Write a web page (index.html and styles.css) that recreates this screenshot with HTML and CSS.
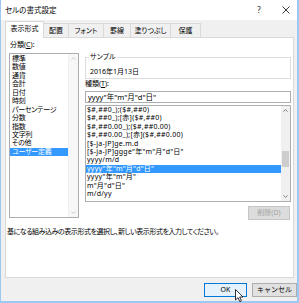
FILE: index.html
```html
<!DOCTYPE html>
<html lang="ja">
<head>
<meta charset="utf-8">
<title>セルの書式設定</title>
<link rel="stylesheet" href="styles.css">
</head>
<body>
<div class="window">
  <div class="titlebar">
    <span class="title">セルの書式設定</span>
    <span class="help">?</span>
    <span class="close"><svg width="8" height="8" viewBox="0 0 8 8"><path d="M0.5 0.5 L7.5 7.5 M7.5 0.5 L0.5 7.5" stroke="#222" stroke-width="0.9" fill="none"/></svg></span>
  </div>
  <div class="body">
    <div class="tabs">
      <div class="tab active">表示形式</div>
      <div class="tab">配置</div>
      <div class="tab">フォント</div>
      <div class="tab">罫線</div>
      <div class="tab">塗りつぶし</div>
      <div class="tab">保護</div>
    </div>
    <div class="panel">
      <div class="columns">
        <div class="left">
          <div class="label">分類(<u>C</u>):</div>
          <div class="listbox cat">
            <ul class="items">
              <li>標準</li>
              <li>数値</li>
              <li>通貨</li>
              <li>会計</li>
              <li>日付</li>
              <li>時刻</li>
              <li>パーセンテージ</li>
              <li>分数</li>
              <li>指数</li>
              <li>文字列</li>
              <li>その他</li>
              <li class="sel">ユーザー定義</li>
            </ul>
            <div class="scroll disabled">
              <span class="arrow"><svg width="5" height="3" viewBox="0 0 5 3"><path d="M0.5 2.6 L2.5 0.6 L4.5 2.6" stroke="currentColor" stroke-width="0.8" fill="none"/></svg></span>
              <span class="track"></span>
              <span class="arrow"><svg width="5" height="3" viewBox="0 0 5 3"><path d="M0.5 0.4 L2.5 2.4 L4.5 0.4" stroke="currentColor" stroke-width="0.8" fill="none"/></svg></span>
            </div>
          </div>
        </div>
        <div class="right">
          <fieldset class="sample">
            <legend>サンプル</legend>
            <div class="sample-value">2016年1月13日</div>
          </fieldset>
          <div class="label type-label">種類(<u>T</u>):</div>
          <div class="input">yyyy"年"m"月"d"日"</div>
          <div class="listbox fmt">
            <ul class="items">
              <li>$#,##0_);($#,##0)</li>
              <li>$#,##0_);[赤]($#,##0)</li>
              <li>$#,##0.00_);($#,##0.00)</li>
              <li>$#,##0.00_);[赤]($#,##0.00)</li>
              <li>[$-ja-JP]ge.m.d</li>
              <li>[$-ja-JP]ggge"年"m"月"d"日"</li>
              <li>yyyy/m/d</li>
              <li class="sel">yyyy"年"m"月"d"日"</li>
              <li>yyyy"年"m"月"</li>
              <li>m"月"d"日"</li>
              <li>m/d/yy</li>
            </ul>
            <div class="scroll">
              <span class="arrow"><svg width="5" height="3" viewBox="0 0 5 3"><path d="M0.5 2.6 L2.5 0.6 L4.5 2.6" stroke="currentColor" stroke-width="0.8" fill="none"/></svg></span>
              <span class="track"><span class="thumb"></span></span>
              <span class="arrow"><svg width="5" height="3" viewBox="0 0 5 3"><path d="M0.5 0.4 L2.5 2.4 L4.5 0.4" stroke="currentColor" stroke-width="0.8" fill="none"/></svg></span>
            </div>
          </div>
          <div class="btnrow">
            <button class="btn delete" disabled>削除(D)</button>
          </div>
        </div>
      </div>
      <p class="hint">基になる組み込みの表示形式を選択し、新しい表示形式を入力してください。</p>
    </div>
    <div class="footer">
      <button class="btn ok">OK</button>
      <button class="btn cancel">キャンセル</button>
    </div>
  </div>
  <svg class="cursor" width="10" height="14" viewBox="0 0 10 14"><path d="M0.5 0.5 L0.5 11 L3 8.6 L4.8 12.6 L6.4 11.9 L4.7 8 L8 8 Z" fill="#fff" stroke="#000" stroke-width="0.8" stroke-linejoin="round"/></svg>
</div>
</body>
</html>
```
FILE: styles.css
```css
* {
  box-sizing: border-box;
  margin: 0;
  padding: 0;
}

html, body {
  width: 299px;
  height: 303px;
  overflow: hidden;
  background: #ffffff;
}

body {
  font-family: "Noto Sans", "Noto Sans CJK JP", sans-serif;
  font-size: 7px;
  line-height: 8px;
  color: #000;
  font-feature-settings: "palt" 1;
}

.window {
  position: relative;
  width: 299px;
  height: 303px;
  display: flex;
  flex-direction: column;
  background: #f0f0f0;
  border-left: 1px solid #9cc8f4;
  border-right: 2px solid #9cc8f4;
  border-bottom: 2px solid #9cc8f4;
}

/* title bar */
.titlebar {
  height: 20px;
  flex: none;
  display: flex;
  align-items: center;
  background: #fff;
  padding-left: 4px;
  padding-right: 1px;
}

.title {
  flex: 1;
  font-size: 7.5px;
}

.help {
  width: 20px;
  text-align: center;
  font-size: 8px;
  margin-right: 7px;
  color: #222;
}

.close {
  width: 20px;
  display: flex;
  justify-content: center;
}

/* body */
.body {
  flex: 1;
  display: flex;
  flex-direction: column;
  padding: 1px 3px 0 4px;
}

.tabs {
  height: 16px;
  display: flex;
  align-items: flex-end;
}

.tab {
  height: 14px;
  display: flex;
  align-items: center;
  justify-content: center;
  border: 1px solid #d9d9d9;
  border-left: none;
  border-bottom: none;
  background: #f0f0f0;
}

.tab.active {
  height: 17px;
  margin-bottom: -1px;
  border-left: 1px solid #d9d9d9;
  background: #fff;
  position: relative;
  z-index: 1;
  padding-bottom: 2px;
}

.tab:nth-child(1) { width: 39px; }
.tab:nth-child(2) { width: 25px; }
.tab:nth-child(3) { width: 35px; }
.tab:nth-child(4) { width: 27px; }
.tab:nth-child(5) { width: 40px; }
.tab:nth-child(6) { width: 30px; }

.panel {
  height: 241px;
  flex: none;
  border: 1px solid #d9d9d9;
  background: #fff;
}

.columns {
  display: flex;
  gap: 6px;
  margin: 3px 2px 0 3px;
}

.left {
  width: 70px;
  flex: none;
}

.right {
  flex: 1;
  display: flex;
  flex-direction: column;
}

.label {
  height: 8px;
  padding-left: 1px;
}

.label u {
  text-decoration: underline;
  text-underline-offset: 1px;
}

/* list boxes */
.listbox {
  display: flex;
  border: 1px solid #abadb3;
  background: #fff;
}

.listbox .items {
  list-style: none;
  flex: 1;
  padding-top: 1px;
  overflow: hidden;
}

.listbox li {
  height: 8.45px;
  line-height: 8.45px;
  white-space: nowrap;
}

.listbox li.sel {
  background: #3399ff;
  color: #fff;
}

.cat {
  height: 165px;
  margin-top: 4px;
}

.cat li {
  padding-left: 2px;
  letter-spacing: -0.3px;
}

.cat .scroll {
  width: 10px;
}

.fmt {
  height: 97px;
  margin-top: 2px;
}

.fmt .items {
  padding-top: 0;
}

.fmt li {
  height: 8.4px;
  line-height: 8.4px;
  padding-left: 1px;
  letter-spacing: 0.25px;
}

.fmt .scroll {
  width: 9px;
}

.scroll {
  display: flex;
  flex-direction: column;
  background: #f0f0f0;
  color: #606060;
}

.scroll.disabled {
  background: #f7f7f7;
  color: #bfbfbf;
  border-left: 1px solid #f0f0f0;
}

.scroll .arrow {
  height: 9px;
  display: flex;
  align-items: center;
  justify-content: center;
}

.scroll .track {
  flex: 1;
  display: flex;
  flex-direction: column;
}

.fmt .thumb {
  margin-top: 36px;
  height: 16px;
  margin-left: 1px;
  margin-right: 1px;
  background: #cdcdcd;
}

/* sample group */
.sample {
  margin-top: 12px;
  border: 1px solid #dcdcdc;
  padding: 7px 4px 2px 4px;
  min-inline-size: 0;
}

.sample legend {
  padding: 0 1px;
  margin-left: -1px;
  line-height: 8px;
}

.sample-value {
  height: 8px;
}

.type-label {
  margin-top: 1px;
  padding-left: 0;
}

.input {
  margin-top: 3px;
  height: 12px;
  border: 1px solid #abadb3;
  padding-left: 2px;
  line-height: 10px;
  font-size: 7.5px;
  white-space: nowrap;
}

.btnrow {
  display: flex;
  justify-content: flex-end;
  margin-top: 4px;
  padding-right: 1px;
}

.btn {
  font-family: inherit;
  font-size: 7px;
  line-height: 8px;
  height: 14px;
  border: 1px solid #adadad;
  background: #e1e1e1;
  color: #000;
  display: flex;
  align-items: center;
  justify-content: center;
}

.delete {
  width: 42px;
  background: #dcdcdc;
  border-color: #c6c6c6;
  color: #a3a3a3;
}

.hint {
  margin-top: 8px;
  margin-left: 1px;
  height: 8px;
  white-space: nowrap;
  letter-spacing: -0.45px;
}

/* footer */
.footer {
  display: flex;
  justify-content: flex-end;
  gap: 5px;
  padding-top: 5px;
  margin-right: -3px;
}

.ok {
  width: 43px;
  background: #e5f1fb;
  border-color: #0078d7;
}

.cancel {
  width: 45px;
}

.cursor {
  position: absolute;
  left: 234px;
  top: 289px;
}
```
